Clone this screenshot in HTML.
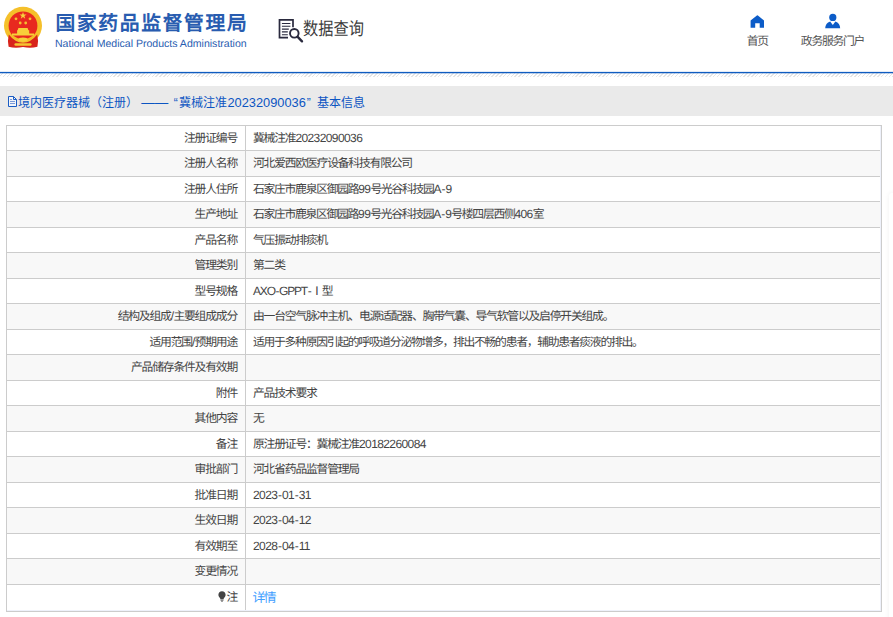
<!DOCTYPE html>
<html lang="zh-CN">
<head>
<meta charset="utf-8">
<title>国家药品监督管理局 数据查询</title>
<style>
html,body{margin:0;padding:0;}
body{width:893px;height:617px;overflow:hidden;background:#fff;position:relative;font-family:"Liberation Sans",sans-serif;color:#444;}
.abs{position:absolute;}
#emblem{left:0;top:0;}
#title{left:55.500px;top:10px;height:28px;line-height:28px;font-size:19.8px;font-weight:bold;color:#285cb0;white-space:nowrap;letter-spacing:1.65px;text-rendering:geometricPrecision;}
#sub{left:55px;top:37.500px;height:13px;line-height:13px;font-size:10.55px;color:#285cb0;text-rendering:geometricPrecision;white-space:nowrap;}
#dq{left:278px;top:18px;}
#dqt{left:303px;top:17px;height:25px;line-height:25px;font-size:18px;color:#3c3c3c;white-space:nowrap;transform:scaleX(0.845);transform-origin:0 0;text-rendering:geometricPrecision;}
.nav{text-align:center;font-size:11.8px;letter-spacing:-1.25px;color:#555;white-space:nowrap;height:14px;line-height:14px;top:33.500px;text-rendering:geometricPrecision;}
#blue{left:0;top:72px;width:893px;height:1px;background:#0f5cc0;}
#blue2{left:0;top:73px;width:893px;height:1px;background:rgba(13,91,191,.28);}
#blue0{left:0;top:71px;width:893px;height:1px;background:rgba(13,91,191,.12);}
#hatch{left:0;top:73px;width:893px;height:4px;background:repeating-linear-gradient(135deg,#fff 0,#fff 1.7px,#e5e5e5 1.7px,#e5e5e5 2.7px);}
#bar{left:0;top:86px;width:893px;height:29.500px;background:#eaeaea;}
#bart{left:18px;top:93.700px;height:18px;line-height:18px;font-size:12px;color:#0c55c2;white-space:nowrap;}
#bart .l{font-size:12.8px;}
#bart .d{font-size:13.5px;}
#bart .q1{margin:0 1.7px 0 2.1px;}
#bart .q2{margin:0 3.2px 0 1px;}
#tbl{left:6px;top:125px;width:874px;height:486px;border:1px solid #ccc;border-top:none;box-sizing:content-box;}
.r{position:absolute;left:0;width:874px;border-top:1px solid #ccc;box-sizing:border-box;font-size:11.8px;letter-spacing:-1.2px;color:#444;white-space:nowrap;text-rendering:geometricPrecision;}
.r.alt{background:#f8f8f8;}
.k{position:absolute;left:0;top:0;bottom:0;width:230px;text-align:right;border-right:1px solid #ccc;padding-right:8px;box-sizing:content-box;}
.v{position:absolute;left:246px;top:0;bottom:0;}
.r .l{font-size:12px;letter-spacing:-0.6px;}
.r .h{margin:0 0.6px;font-style:normal;}
.r .hd{margin:0 0.600px;}
.r .caps{letter-spacing:-1.15px;}
.r a{color:#409eff;font-size:12.8px;letter-spacing:-1.6px;position:relative;left:-0.500px;top:-0.300px;}
.bulb{vertical-align:-0.700px;margin-right:0.400px;}
#side{left:889px;top:193px;width:20px;height:440px;background:#fff;box-shadow:0 0 5px rgba(0,0,0,.06);border-radius:3px;}
</style>
</head>
<body>
<svg id="emblem" class="abs" width="48" height="54" viewBox="0 0 48 54">
  <circle cx="23" cy="25.800" r="19" fill="#f5c02a"/>
  <circle cx="23" cy="25.800" r="14.400" fill="#e8291f"/>
  <path d="M8.800 34.500 Q7.200 41 8.600 46.800 Q15.500 48.600 23 47 Q30.500 48.600 37.400 46.800 Q38.800 41 37.200 34.500 Q31 42.500 23 42.800 Q15 42.500 8.800 34.500 Z" fill="#d8241b"/>
  <path d="M10.500 35.500 Q16 41.500 23 41.500 Q30 41.500 35.500 35.500 L34 34.500 Q29 39 23 39 Q17 39 12 34.500 Z" fill="#f3bb26"/>
  <ellipse cx="23" cy="39.600" rx="4.600" ry="2.100" fill="#f7cf3c"/>
  <rect x="14.400" y="43.200" width="17.200" height="2.600" rx="1.300" fill="#f5c631"/>
  <path d="M12 35.600 H34.200 V33.400 H29.200 V30.200 H28.400 L27.600 28.100 H18.400 L17.600 30.200 H17.100 V33.400 H12 Z" fill="#f8cf3a"/>
  <polygon fill="#f7d23e" points="23,11.900 23.900,14.500 26.600,14.500 24.400,16.100 25.200,18.700 23,17.100 20.800,18.700 21.600,16.100 19.400,14.500 22.100,14.500"/>
  <circle cx="16" cy="18.800" r="1.400" fill="#f3c030"/>
  <circle cx="30" cy="18.800" r="1.400" fill="#f3c030"/>
  <circle cx="20.200" cy="23" r="1.400" fill="#f3c030"/>
  <circle cx="25.700" cy="23" r="1.400" fill="#f3c030"/>
</svg>
<div id="title" class="abs">国家药品监督管理局</div>
<div id="sub" class="abs">National Medical Products Administration</div>

<svg id="dq" class="abs" width="26" height="26" viewBox="0 0 26 26">
  <path d="M15 9.200 V1.900 H1.500 V19.600 H10" fill="none" stroke="#2a2a3e" stroke-width="1.700"/>
  <path d="M3.900 5.500 H12.400 M3.900 8.300 H12.400 M3.900 11.100 H10.800 M3.900 13.900 H9.800 M3.900 16.700 H9.800" stroke="#2a2a3e" stroke-width="1.100"/>
  <circle cx="16.300" cy="15.300" r="4.300" fill="#fff" stroke="#2a2a3e" stroke-width="1.900"/>
  <path d="M19.700 18.800 L24 23.300" stroke="#2a2a3e" stroke-width="2.400" stroke-linecap="round"/>
</svg>
<div id="dqt" class="abs">数据查询</div>

<svg class="abs" style="left:750px;top:14px" width="15" height="14" viewBox="0 0 15 14">
  <path d="M6.900 1.400 Q7.400 0.900 7.900 1.400 L14 6.400 V13.700 H9.700 V9.200 H5.200 V13.700 H0.600 V6.400 Z" fill="#0c5cc8"/>
</svg>
<div class="abs nav" style="left:737.300px;width:40px;">首页</div>
<svg class="abs" style="left:824px;top:13px" width="17" height="16" viewBox="0 0 17 16">
  <circle cx="8.800" cy="4.400" r="3.600" fill="#0c5cc8"/>
  <path d="M1.200 15.300 Q1.300 10.200 6.200 8.500 L8.800 12 L11.400 8.500 Q16 10.200 16.200 15.300 Z" fill="#0c5cc8"/>
</svg>
<div class="abs nav" style="left:792.500px;width:80px;">政务服务门户</div>

<div id="hatch" class="abs"></div>
<div id="blue" class="abs"></div><div id="blue2" class="abs"></div><div id="blue0" class="abs"></div>

<div id="bar" class="abs"></div>
<svg class="abs" style="left:8px;top:96px" width="10" height="12" viewBox="0 0 10 12">
  <path d="M0.500 0.500 H5.500 L8.500 3.500 V10.500 H0.500 Z" fill="#f2f4f9" stroke="#1a5cc4" stroke-width="1"/>
  <path d="M5.500 0.500 V3.500 H8.500" fill="none" stroke="#1a5cc4" stroke-width="1"/>
  <path d="M2 3.500 H4 M2 5.500 H7 M2 7.500 H7" stroke="#7b9ad8" stroke-width="1"/>
</svg>
<div id="bart" class="abs">境内医疗器械（注册） <span class="d">——</span> <span class="q1">“</span>冀械注准<span class="l">20232090036</span><span class="q2">”</span> 基本信息</div>

<div id="tbl" class="abs">
<div class="r" style="top:0px;height:25px;line-height:24px"><div class="k">注册证编号</div><div class="v">冀械注准<span class="l">20232090036</span></div></div>
<div class="r alt" style="top:25px;height:26px;line-height:25px"><div class="k">注册人名称</div><div class="v">河北爱西欧医疗设备科技有限公司</div></div>
<div class="r" style="top:51px;height:25px;line-height:24px"><div class="k">注册人住所</div><div class="v" style="letter-spacing:-1.27px">石家庄市鹿泉区御园路<span class="l">99</span>号光谷科技园<span class="l">A<i class="h">-</i>9</span></div></div>
<div class="r alt" style="top:76px;height:26px;line-height:25px"><div class="k">生产地址</div><div class="v" style="letter-spacing:-1.29px">石家庄市鹿泉区御园路<span class="l">99</span>号光谷科技园<span class="l">A<i class="h">-</i>9</span>号楼四层西侧<span class="l">406</span>室</div></div>
<div class="r" style="top:102px;height:25px;line-height:24px"><div class="k">产品名称</div><div class="v">气压振动排痰机</div></div>
<div class="r alt" style="top:127px;height:26px;line-height:25px"><div class="k">管理类别</div><div class="v">第二类</div></div>
<div class="r" style="top:153px;height:25px;line-height:24px"><div class="k">型号规格</div><div class="v"><span class="l caps">AXO<i class="h">-</i>GPPT<i class="h">-</i></span>Ⅰ型</div></div>
<div class="r alt" style="top:178px;height:26px;line-height:25px"><div class="k">结构及组成<span class="l">/</span>主要组成成分</div><div class="v">由一台空气脉冲主机、电源适配器、胸带气囊、导气软管以及启停开关组成。</div></div>
<div class="r" style="top:204px;height:25px;line-height:24px"><div class="k">适用范围<span class="l">/</span>预期用途</div><div class="v" style="letter-spacing:-1.27px">适用于多种原因引起的呼吸道分泌物增多，排出不畅的患者，辅助患者痰液的排出。</div></div>
<div class="r alt" style="top:229px;height:26px;line-height:25px"><div class="k">产品储存条件及有效期</div><div class="v"></div></div>
<div class="r" style="top:255px;height:25px;line-height:24px"><div class="k">附件</div><div class="v">产品技术要求</div></div>
<div class="r alt" style="top:280px;height:26px;line-height:25px"><div class="k">其他内容</div><div class="v">无</div></div>
<div class="r" style="top:306px;height:25px;line-height:24px"><div class="k">备注</div><div class="v">原注册证号：冀械注准<span class="l">20182260084</span></div></div>
<div class="r alt" style="top:331px;height:26px;line-height:25px"><div class="k">审批部门</div><div class="v">河北省药品监督管理局</div></div>
<div class="r" style="top:357px;height:25px;line-height:24px"><div class="k">批准日期</div><div class="v"><span class="l">2023<i class="h hd">-</i>01<i class="h hd">-</i>31</span></div></div>
<div class="r alt" style="top:382px;height:26px;line-height:25px"><div class="k">生效日期</div><div class="v"><span class="l">2023<i class="h hd">-</i>04<i class="h hd">-</i>12</span></div></div>
<div class="r" style="top:408px;height:25px;line-height:24px"><div class="k">有效期至</div><div class="v"><span class="l">2028<i class="h hd">-</i>04<i class="h hd">-</i>11</span></div></div>
<div class="r alt" style="top:433px;height:26px;line-height:25px"><div class="k">变更情况</div><div class="v"></div></div>
<div class="r" style="top:459px;height:27px;line-height:25px"><div class="k"><svg class="bulb" width="8" height="11" viewBox="0 0 8 11"><path d="M4 .3C1.8.3.4 1.9.4 3.8c0 1.3.7 2.2 1.4 3 .4.5.6.9.6 1.4h3.2c0-.5.2-.9.6-1.4.7-.8 1.4-1.700 1.4-3C7.600 1.900 6.200.3 4 .3z" fill="#444"/><rect x="2.500" y="8.600" width="3" height="1" fill="#555"/><rect x="3" y="9.800" width="2" height=".8" fill="#666"/></svg>注</div><div class="v"><a>详情</a></div></div>
<div class="abs" style="left:873px;top:1px;width:1px;height:485px;background:#eef1fa"></div><div class="abs" style="left:0;top:485px;width:874px;height:1px;background:#eef1fa"></div>
</div>
<div id="side" class="abs"></div>
</body>
</html>
